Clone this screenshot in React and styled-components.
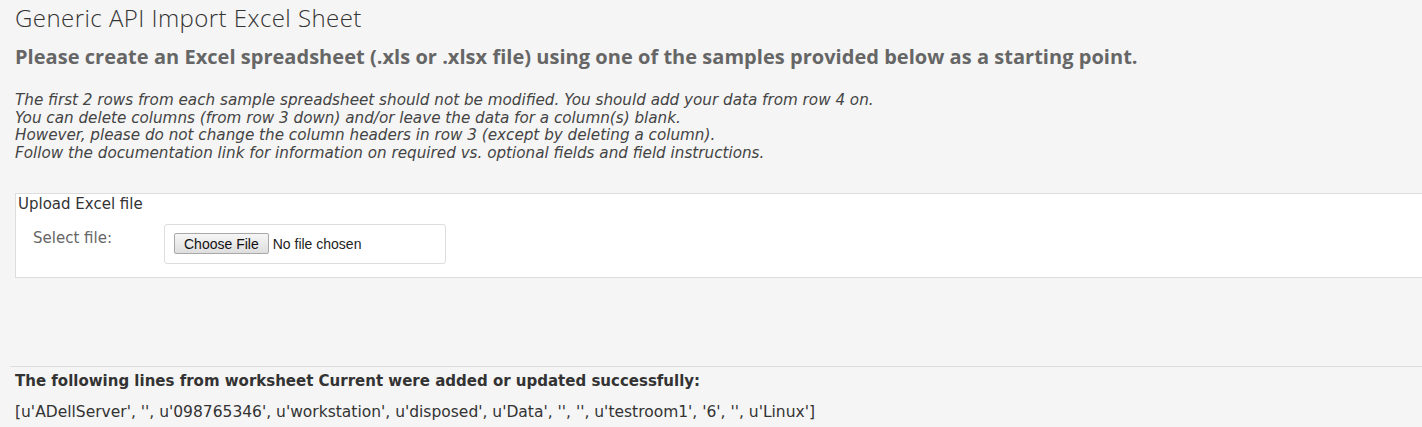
import React from "react";
import styled, { createGlobalStyle } from "styled-components";

const GlobalStyle = createGlobalStyle`
  body {
    margin: 0;
    background: #f5f5f5;
    font-family: "DejaVu Sans", sans-serif;
    color: #333;
    overflow: hidden;
  }
`;

const Page = styled.div`
  padding: 0 0 0 15px;
  width: 1422px;
  box-sizing: border-box;
`;

const Title = styled.h1`
  margin: 0;
  font-family: "Open Sans", sans-serif;
  font-weight: 300;
  font-size: 24px;
  letter-spacing: 0.45px;
  line-height: 36px;
  color: #333;
`;

const Lead = styled.h2`
  margin: 9px 0 0;
  font-family: "Open Sans", sans-serif;
  font-weight: 700;
  font-size: 20px;
  letter-spacing: 0.03px;
  line-height: 24px;
  color: #666;
`;

const Notes = styled.p`
  margin: 23px 0 0;
  font-style: italic;
  font-size: 15.2px;
  line-height: 17.7px;
  color: #444;
`;

const Fieldset = styled.fieldset`
  margin: 30px 0 0;
  padding: 2px 0 13px 2px;
  border: 1px solid #ddd;
  border-right: none;
  background: #fff;
  min-width: 0;
`;

const Legend = styled.div`
  font-size: 15px;
  line-height: 16px;
  color: #333;
`;

const Row = styled.div`
  display: flex;
  align-items: flex-start;
  margin-top: 12px;
`;

const Label = styled.label`
  box-sizing: border-box;
  width: 146px;
  padding: 5px 0 0 15px;
  font-size: 15px;
  line-height: 18px;
  color: #666;
`;

const FileBox = styled.div`
  width: 282px;
  height: 40px;
  box-sizing: border-box;
  border: 1px solid #ddd;
  border-radius: 3px;
  display: flex;
  align-items: center;
  padding-left: 9px;
  font-family: Arial, "Liberation Sans", sans-serif;
  font-size: 14px;
  color: #222;
`;

const ChooseButton = styled.span`
  display: inline-flex;
  align-items: center;
  box-sizing: border-box;
  height: 21px;
  padding: 0 9px;
  border: 1px solid #a8a8a8;
  border-radius: 2px;
  background: linear-gradient(#f6f6f6, #dedede);
  color: #111;
  margin-right: 4px;
`;

const Rule = styled.hr`
  margin: 88px 0 0 -5px;
  border: none;
  border-top: 1px solid #ddd;
`;

const ResultTitle = styled.div`
  margin-top: 5px;
  font-weight: 700;
  font-size: 15px;
  line-height: 18px;
  color: #333;
`;

const ResultLine = styled.div`
  margin-top: 13px;
  font-size: 15.5px;
  line-height: 18px;
  color: #333;
`;

export default function App() {
  return (
    <>
      <GlobalStyle />
      <Page>
        <Title>Generic API Import Excel Sheet</Title>
        <Lead>
          Please create an Excel spreadsheet (.xls or .xlsx file) using one of
          the samples provided below as a starting point.
        </Lead>
        <Notes>
          The first 2 rows from each sample spreadsheet should not be modified.
          You should add your data from row 4 on.
          <br />
          You can delete columns (from row 3 down) and/or leave the data for a
          column(s) blank.
          <br />
          However, please do not change the column headers in row 3 (except by
          deleting a column).
          <br />
          Follow the documentation link for information on required vs.
          optional fields and field instructions.
        </Notes>
        <Fieldset>
          <Legend>Upload Excel file</Legend>
          <Row>
            <Label>Select file:</Label>
            <FileBox>
              <ChooseButton>Choose File</ChooseButton>
              No file chosen
            </FileBox>
          </Row>
        </Fieldset>
        <Rule />
        <ResultTitle>
          The following lines from worksheet Current were added or updated
          successfully:
        </ResultTitle>
        <ResultLine>
          [u'ADellServer', '', u'098765346', u'workstation', u'disposed',
          u'Data', '', '', u'testroom1', '6', '', u'Linux']
        </ResultLine>
      </Page>
    </>
  );
}
